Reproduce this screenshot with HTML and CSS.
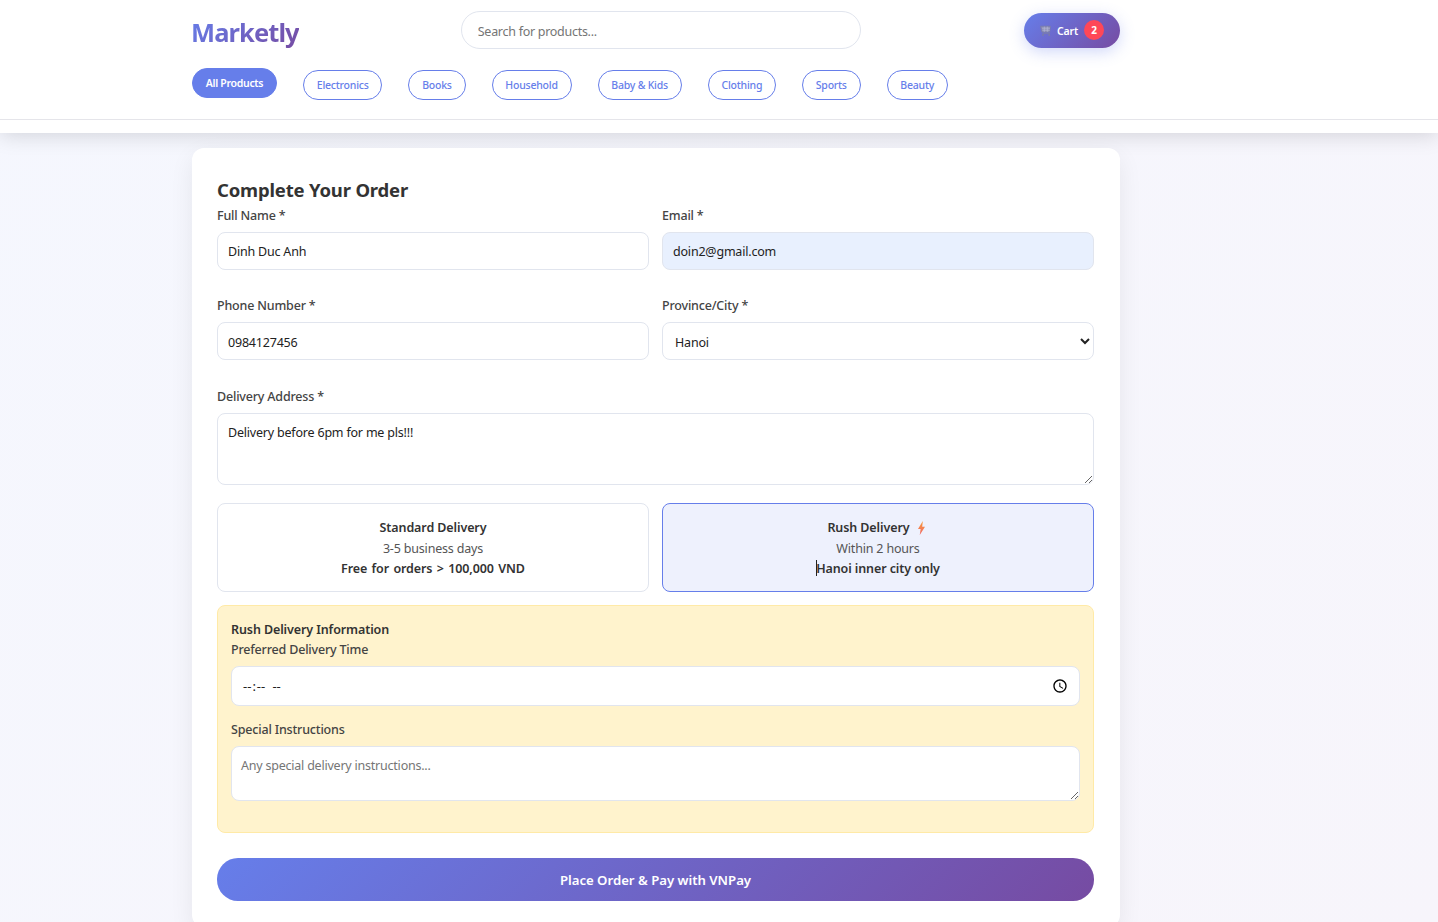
FILE: index.html
```html
<!DOCTYPE html>
<html>
<head>
	<title>Marketly - Checkout</title>
	<link rel="stylesheet" href="styles.css">
</head>
<body>
	<header class="header">
		<div class="container">
			<div class="header-top">
				<div class="logo">Marketly</div>
				<input class="search" type="text" placeholder="Search for products...">
				<button class="cart-btn">
					<svg class="cart-icon" viewBox="0 0 12 11" width="12" height="11">
						<path d="M.5 1.2h9.8l-.7 6H2z" fill="#8b8db6" stroke="#7b7da6" stroke-width=".8"/>
						<path d="M2 3.2h8M2.4 5.2h7.4M4.3 1.6v5.2M7.3 1.6v5.2" stroke="#b5b7d6" stroke-width=".7"/>
						<path d="M2.5 8.6h7.5" stroke="#7b7da6" stroke-width=".8"/>
						<circle cx="3" cy="10" r=".9" fill="#7b7da6"/>
						<circle cx="9.2" cy="10" r=".9" fill="#7b7da6"/>
					</svg>
					<span class="cart-label">Cart</span>
					<span class="cart-count">2</span>
				</button>
			</div>
			<nav class="categories">
				<a class="pill active">All Products</a>
				<a class="pill">Electronics</a>
				<a class="pill">Books</a>
				<a class="pill">Household</a>
				<a class="pill">Baby &amp; Kids</a>
				<a class="pill">Clothing</a>
				<a class="pill">Sports</a>
				<a class="pill">Beauty</a>
			</nav>
		</div>
		<div class="header-rule"></div>
	</header>

	<main class="container">
		<form class="card">
			<h2>Complete Your Order</h2>
			<div class="form-row">
				<div class="field">
					<label>Full Name *</label>
					<input type="text" value="Dinh Duc Anh">
				</div>
				<div class="field">
					<label>Email *</label>
					<input class="autofilled" type="email" value="doin2@gmail.com">
				</div>
			</div>
			<div class="form-row">
				<div class="field">
					<label>Phone Number *</label>
					<input type="tel" value="0984127456">
				</div>
				<div class="field">
					<label>Province/City *</label>
					<select>
						<option>Hanoi</option>
						<option>Ho Chi Minh City</option>
						<option>Da Nang</option>
					</select>
				</div>
			</div>
			<div class="field address">
				<label>Delivery Address *</label>
				<textarea>Delivery before 6pm for me pls!!!</textarea>
			</div>

			<div class="delivery-options">
				<div class="option">
					<strong>Standard Delivery</strong>
					<p>3-5 business days</p>
					<strong class="free-note">Free for orders &gt; 100,000 VND</strong>
				</div>
				<div class="option selected">
					<strong>Rush Delivery
						<svg class="bolt" viewBox="0 0 10 16" width="9" height="14">
							<defs>
								<linearGradient id="bolt-fill" x1="0" y1="0" x2="0" y2="1">
									<stop offset="0" stop-color="#f79a35"/>
									<stop offset="1" stop-color="#f0686a"/>
								</linearGradient>
							</defs>
							<path d="M6.5 0 1 9h3l-1 7 6-9.5H5.8z" fill="url(#bolt-fill)"/>
						</svg>
					</strong>
					<p>Within 2 hours</p>
					<strong><span class="caret"></span>Hanoi inner city only</strong>
				</div>
			</div>

			<section class="rush-panel">
				<h4>Rush Delivery Information</h4>
				<div class="rush-field">
					<label>Preferred Delivery Time</label>
					<input type="time">
				</div>
				<div class="rush-field">
					<label>Special Instructions</label>
					<textarea placeholder="Any special delivery instructions..."></textarea>
				</div>
			</section>

			<button class="place-order" type="button">Place Order &amp; Pay with VNPay</button>
		</form>
	</main>
</body>
</html>
```

FILE: styles.css
```css
* {
	box-sizing: border-box;
}

body {
	background: linear-gradient(135deg, #f5f7fe, #f7f5fb);
	color: #333;
	font-family: "Noto Sans", "Open Sans", sans-serif;
	font-size: 12.5px;
	letter-spacing: -0.18px;
	margin: 0;
	min-height: 100vh;
	padding: 0;
}

.container {
	margin-left: 192px;
	width: 928px;
}

.header {
	background-color: #fff;
	box-shadow: 0 2px 20px rgba(0,0,0,0.15);
	height: 133px;
}

.header-top {
	align-items: center;
	display: flex;
	height: 60px;
}

.logo {
	background: linear-gradient(135deg, #667eea, #764ba2);
	-webkit-background-clip: text;
	background-clip: text;
	color: transparent;
	font-size: 25.5px;
	font-weight: 700;
	letter-spacing: -0.9px;
	margin-left: -1px;
	margin-right: 162px;
	margin-top: 3px;
}

.search {
	border: 1px solid #e1e5ee;
	border-radius: 19px;
	color: #333;
	font-family: inherit;
	font-size: 12.5px;
	height: 38px;
	letter-spacing: -0.28px;
	padding: 2px 16px 0;
	width: 400px;
}

.search::placeholder {
	color: #757575;
}

.cart-btn {
	align-items: center;
	background: linear-gradient(135deg, #667eea, #764ba2);
	border: none;
	border-radius: 18px;
	box-shadow: 0 4px 15px rgba(102,126,234,0.3);
	color: #fff;
	display: flex;
	font-family: inherit;
	font-size: 10.5px;
	font-weight: 600;
	gap: 5px;
	height: 35px;
	justify-content: center;
	letter-spacing: -0.15px;
	margin-left: auto;
	width: 96px;
}

.cart-label {
	padding-top: 2px;
}

.cart-count {
	align-items: center;
	background-color: #ff4757;
	border-radius: 50%;
	display: flex;
	font-size: 10px;
	font-weight: 700;
	height: 20px;
	justify-content: center;
	margin-left: 1px;
	width: 20px;
}

.categories {
	display: flex;
	gap: 26px;
	padding-top: 10px;
}

.pill {
	align-items: center;
	border: 1px solid #667eea;
	border-radius: 15px;
	color: #667eea;
	display: flex;
	font-size: 10.5px;
	font-weight: 500;
	height: 30px;
	letter-spacing: -0.22px;
	padding: 0 12.8px;
}

.pill.active {
	background-color: #667eea;
	color: #fff;
	font-weight: 600;
	letter-spacing: -0.3px;
	transform: translateY(-2px);
}

.header-rule {
	border-top: 1px solid #e5e5ea;
	margin-top: 19px;
}

.card {
	background-color: #fff;
	border-radius: 12px;
	box-shadow: 0 8px 25px rgba(0,0,0,0.07);
	margin-top: 15px;
	padding: 29px 26px 26px 25px;
}

h2 {
	font-size: 18.5px;
	font-weight: 700;
	letter-spacing: -0.18px;
	line-height: 26px;
	margin: 0 0 4px;
}

label {
	color: #444;
	display: block;
	font-weight: 500;
	line-height: 18px;
	margin-bottom: 7px;
}

.form-row {
	display: grid;
	gap: 13px;
	grid-template-columns: 1fr 1fr;
	margin-bottom: 27px;
}

.field input,
.field select,
.field textarea {
	background-color: #fff;
	border: 1px solid #e1e5ee;
	border-radius: 8px;
	color: #222;
	display: block;
	font-family: inherit;
	font-size: 12.5px;
	height: 38px;
	letter-spacing: -0.2px;
	padding: 0 10px;
	width: 100%;
}

.field select {
	padding: 2px 8px 0;
}

.form-row + .form-row input {
	padding-top: 2px;
}

.field input.autofilled {
	background-color: #e8f0fe;
}

.field textarea {
	height: 72px;
	padding: 10px;
}

.address {
	margin-bottom: 18px;
	padding-top: 1px;
}

.delivery-options {
	display: grid;
	gap: 13px;
	grid-template-columns: 1fr 1fr;
	margin-bottom: 13px;
}

.option {
	border: 1px solid #e1e5ee;
	border-radius: 8px;
	height: 89px;
	padding: 14px 10px;
	text-align: center;
}

.option strong {
	display: block;
	font-weight: 600;
	letter-spacing: -0.1px;
	line-height: 20px;
}

.option p {
	color: #555;
	line-height: 20px;
	margin: 1px 0 0;
}

.option .free-note {
	word-spacing: 1.2px;
}

.option.selected {
	background-color: #eef1fd;
	border-color: #667eea;
}

.bolt {
	margin: 0 3px 0 4px;
	vertical-align: -3px;
}

.caret {
	border-left: 1px solid #222;
	display: inline-block;
	height: 16px;
	margin-right: -1px;
	vertical-align: -3px;
}

.rush-panel {
	background-color: #fff3cd;
	border: 1px solid #ffeaa7;
	border-radius: 8px;
	height: 228px;
	margin-bottom: 25px;
	padding: 15px 13px;
}

h4 {
	font-size: 12.5px;
	font-weight: 600;
	letter-spacing: -0.1px;
	line-height: 18px;
	margin: 0 0 2px;
}

.rush-field input,
.rush-field textarea {
	background-color: #fff;
	border: 1px solid #e1e5ee;
	border-radius: 8px;
	color: #222;
	display: block;
	font-family: inherit;
	font-size: 12.5px;
	letter-spacing: -0.22px;
	padding: 0 10px;
	width: 100%;
}

.rush-field input {
	font-size: 13px;
	height: 40px;
	margin-bottom: 15px;
}

.rush-field input::-webkit-datetime-edit {
	letter-spacing: 1.4px;
}

.rush-field input::-webkit-datetime-edit-ampm-field {
	margin-left: 3px;
}

.rush-field input::-webkit-calendar-picker-indicator {
	height: 16px;
	margin-right: -2px;
	width: 16px;
}

.rush-field textarea {
	height: 55px;
	padding: 10px 9px;
}

.place-order {
	background: linear-gradient(135deg, #667eea, #764ba2);
	border: none;
	border-radius: 21px;
	color: #fff;
	display: block;
	font-family: inherit;
	font-size: 13.2px;
	font-weight: 600;
	height: 43px;
	letter-spacing: -0.02px;
	width: 100%;
}
```
